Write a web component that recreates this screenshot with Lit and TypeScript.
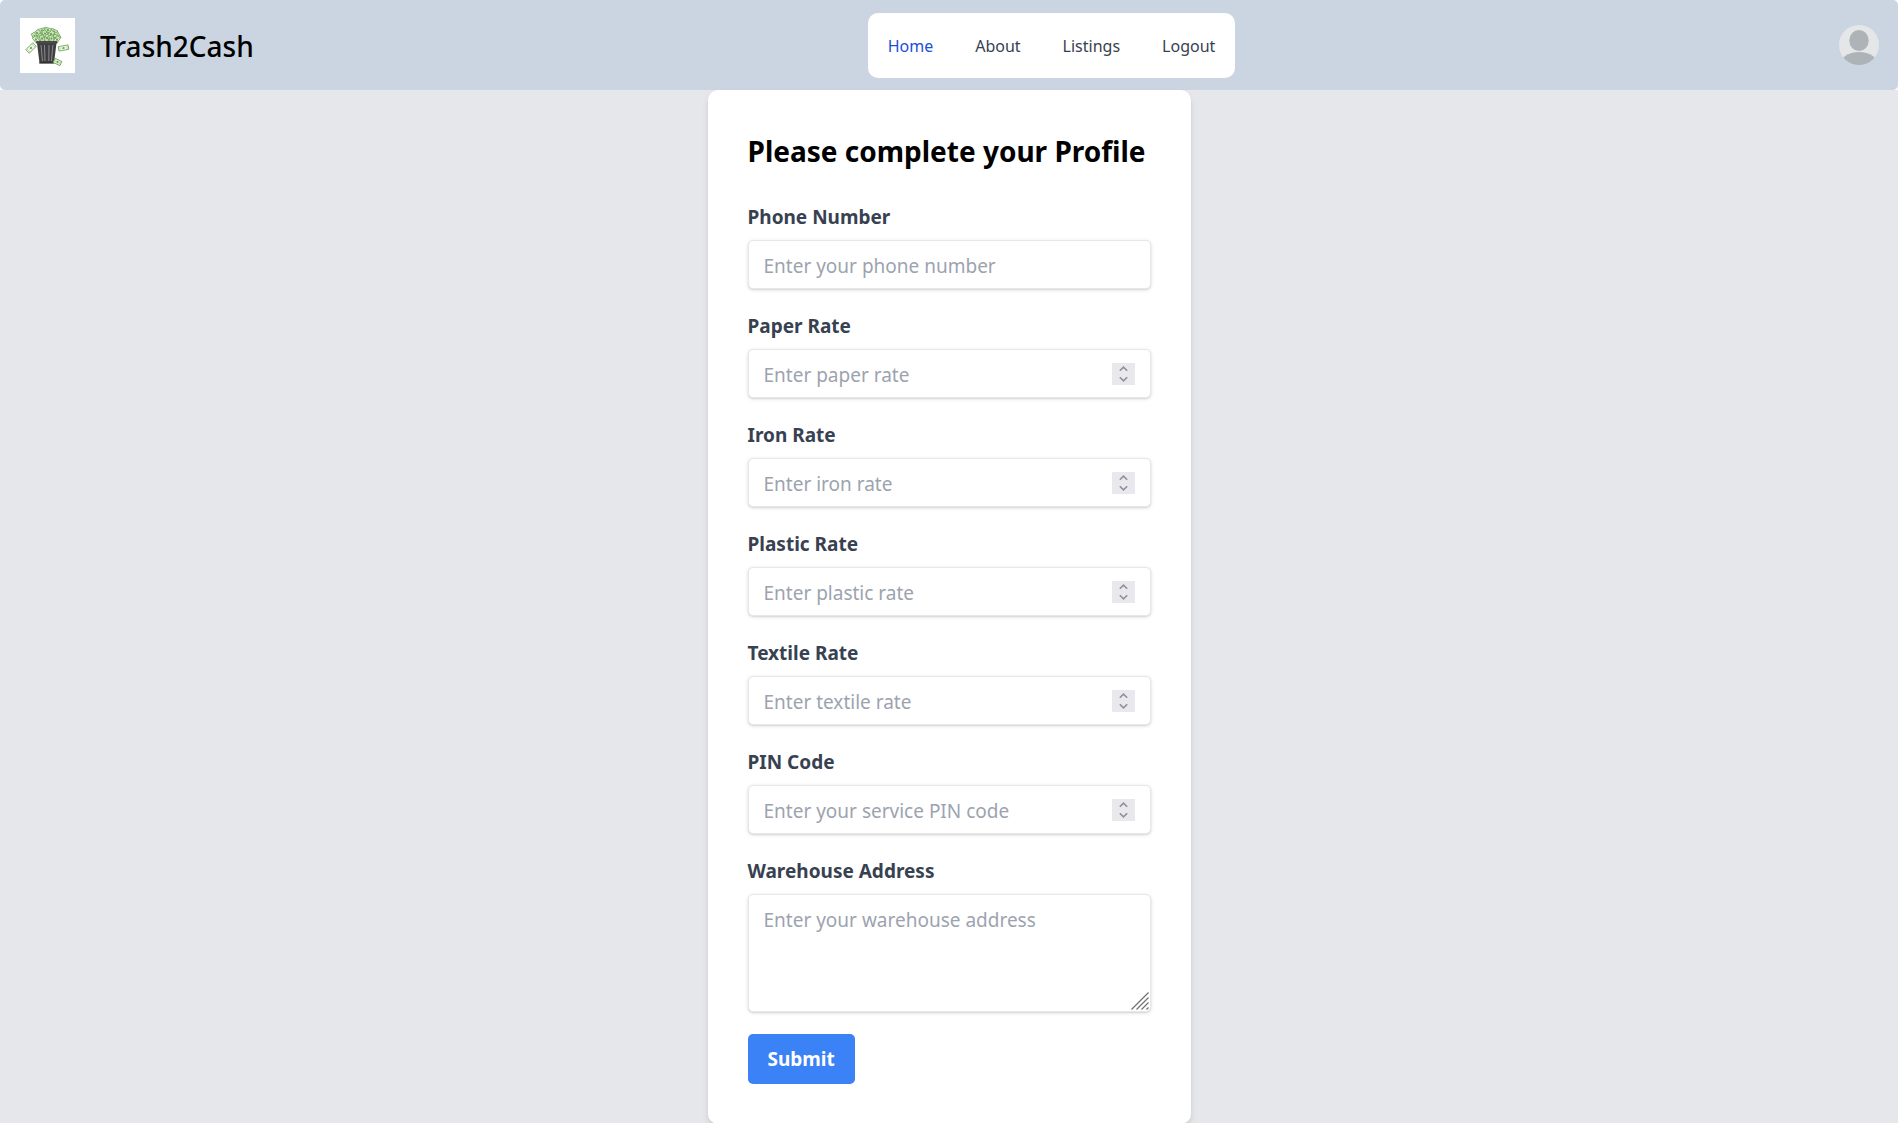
import { LitElement, html, css, svg } from "lit";
import { customElement, property } from "lit/decorators.js";

const note = (x: number, y: number, angle: number, w = 9, h = 5) => svg`
  <g transform="translate(${x} ${y}) rotate(${angle})">
    <rect x=${-w / 2} y=${-h / 2} width=${w} height=${h} fill="#eef5e8" stroke="#6ba351" stroke-width=".8"/>
    <path d="M${-w / 2 + 1.4} ${-h / 2}v${h}M${w / 2 - 1.4} ${-h / 2}v${h}" stroke="#a5cb93" stroke-width=".7"/>
    <ellipse rx="1.2" ry="1.1" fill="#6ba351"/>
  </g>`;

const heap: [number, number, number][] = [
  [22, 12.5, -15], [28, 12, 15], [34, 13.5, 25], [17, 15, -40], [25, 15.5, 60],
  [14.5, 18, 60], [37.5, 17.5, 60], [31, 16, -50], [19.5, 19, -60], [35, 20, -70],
  [16, 21.5, 50], [22, 20.5, 75], [27, 20, -70], [31.5, 20.5, 75], [37, 21.5, -55],
];

const stack = css`"Segoe UI", "Noto Sans", "Open Sans", sans-serif`;

@customElement("app-header")
class AppHeader extends LitElement {
  static styles = css`
    :host { display: block; background: #fff; font-family: ${stack}; }
    .bar {
      display: grid; grid-template-columns: 1fr auto 1fr; align-items: center;
      box-sizing: border-box; min-height: 90px; padding: 13px 19px 12px 20px;
      background: #cbd5e1; border-radius: 5px;
    }
    .brand { display: flex; align-items: center; gap: 25px; color: #000; text-decoration: none; }
    .logo { width: 55px; height: 55px; }
    .name { font-size: 28px; line-height: 40px; font-weight: 500; }
    .menu {
      display: flex; gap: 42px; margin: 0 0 0 204px; padding: 21px 20px 19px; list-style: none;
      background: #fff; border-radius: 10px;
    }
    .link { display: block; font-size: 16px; line-height: 25px; color: #374151; text-decoration: none; }
    .active { color: #1d4ed8; }
    .user { justify-self: end; align-self: start; margin: 12px 0 0; padding: 0; border: 0; background: none; cursor: pointer; }
    .avatar { display: block; width: 40px; height: 40px; }
  `;

  render() {
    return html`
      <header class="bar">
        <a class="brand" href="#home">
          <svg class="logo" viewBox="0 0 55 55" aria-hidden="true">
            <rect width="55" height="55" fill="#fff"/>
            <path d="M14 23L12 17L17 12L26 10.500L35 12L40 17.500L38 23Z" fill="#8bbb74"/>
            ${heap.map(([x, y, a]) => note(x, y, a, 6.5, 4))}
            <path d="M17 25H36.500L34 45H19.500Z" fill="#3f3f41"/>
            <path d="M21 27L22.500 43M24.500 27L25 43M29 27L28.800 43M32.800 27L31.500 43" stroke="#8c8c90" stroke-width="1"/>
            <rect x="16" y="23" width="21.500" height="2.600" rx="1" fill="#4a4a4c"/>
            <path d="M19.300 45H34.200" stroke="#29292b" stroke-width="1.200"/>
            ${note(11, 30, -45, 10, 5)}${note(43.5, 30, -10, 10, 4.5)}${note(37.5, 44, 25, 7.5, 4.5)}
          </svg>
          <span class="name">Trash2Cash</span>
        </a>
        <nav>
          <ul class="menu">
            ${["Home", "About", "Listings", "Logout"].map((t, i) => html`
              <li><a class="link ${i === 0 ? "active" : ""}" href="#${t.toLowerCase()}">${t}</a></li>`)}
          </ul>
        </nav>
        <button class="user" type="button" aria-label="Account">
          <svg class="avatar" viewBox="0 0 40 40" aria-hidden="true">
            <defs><clipPath id="round"><circle cx="20" cy="20" r="20"/></clipPath></defs>
            <g clip-path="url(#round)">
              <rect width="40" height="40" fill="#e4e6e8"/>
              <ellipse cx="20" cy="15.500" rx="9.700" ry="10.500" fill="#adb3b7"/>
              <ellipse cx="20" cy="41" rx="19.500" ry="14" fill="#adb3b7"/>
            </g>
          </svg>
        </button>
      </header>`;
  }
}

@customElement("form-field")
class FormField extends LitElement {
  @property() label = "";
  @property() hint = "";
  @property() kind = "text";

  static styles = css`
    :host { display: block; font-family: ${stack}; }
    .label { display: block; margin-bottom: 8px; font-size: 19px; line-height: 30px; font-weight: 700; color: #374151; }
    .box { display: grid; align-items: center; }
    .control, .spin, .grip { grid-area: 1 / 1; }
    .control {
      box-sizing: border-box; width: 100%; min-width: 0; margin: 0; padding: 10px 15px 8px;
      border: 1px solid #e5e7eb; border-radius: 5px; outline-color: #3b82f6;
      background: #fff; color: #374151; font: 19px/30px ${stack};
      box-shadow: 0 1px 4px rgb(0 0 0 / 10%), 0 1px 2px rgb(0 0 0 / 10%);
      appearance: textfield;
    }
    .control::placeholder { color: #9ca3af; opacity: 1; }
    .control::-webkit-inner-spin-button { appearance: none; margin: 0; }
    .single { height: 49px; }
    .area { display: block; height: 118px; resize: vertical; }
    .area::-webkit-resizer { background: transparent; }
    .spin {
      justify-self: end; display: grid; box-sizing: border-box; width: 23px; height: 22px;
      margin-right: 16px; padding: 1px 0; background: #e9e9ed;
    }
    .step { display: grid; place-items: center; padding: 0; border: 0; background: none; color: #8f8f9d; }
    .arrow { display: block; width: 9px; height: 6px; }
    .grip { justify-self: end; align-self: end; width: 18px; height: 18px; margin: 0 2px 2px 0; pointer-events: none; }
  `;

  private step(direction: 1 | -1) {
    const input = this.renderRoot.querySelector("input");
    if (direction > 0) input?.stepUp();
    else input?.stepDown();
  }

  private arrow(direction: 1 | -1) {
    const d = direction > 0 ? "M.8 4.800L4.500 1.200L8.200 4.800" : "M.8 1.200L4.500 4.800L8.200 1.200";
    return html`
      <button class="step" type="button" tabindex="-1" aria-label=${direction > 0 ? "Increase" : "Decrease"}
        @click=${() => this.step(direction)}>
        <svg class="arrow" viewBox="0 0 9 6" fill="none" stroke="currentColor" stroke-width="1.600"><path d=${d}/></svg>
      </button>`;
  }

  render() {
    const area = this.kind === "area";
    return html`
      <label class="label" for="control">${this.label}</label>
      <div class="box">
        ${area
          ? html`<textarea class="control area" id="control" placeholder=${this.hint}></textarea>
              <svg class="grip" viewBox="0 0 18 18" stroke="#70706c" stroke-width="1.200" aria-hidden="true">
                <path d="M.5 17.500L17.500 .5M5.500 17.500L17.500 5.500M10.500 17.500L17.500 10.500M15.500 17.500L17.500 15.500"/>
              </svg>`
          : html`<input class="control single" id="control" type=${this.kind} placeholder=${this.hint}>`}
        ${this.kind === "number" ? html`<div class="spin">${this.arrow(1)}${this.arrow(-1)}</div>` : ""}
      </div>`;
  }
}

@customElement("app-root")
class AppRoot extends LitElement {
  static styles = css`
    :host { display: block; min-height: 100vh; background: #e5e7eb; font-family: ${stack}; }
    .card {
      box-sizing: border-box; width: 100%; max-width: 483px; margin: 0 auto; padding: 40px;
      background: #fff; border-radius: 10px;
      box-shadow: 0 5px 8px -1px rgb(0 0 0 / 10%), 0 2px 5px -2px rgb(0 0 0 / 10%);
    }
    .title { margin: 0 0 30px; font-size: 28px; line-height: 42px; font-weight: 700; color: #000; white-space: nowrap; }
    .form { display: grid; gap: 22px; }
    .submit {
      justify-self: start; padding: 10px 20px; border: 0; border-radius: 5px;
      background: #3b82f6; color: #fff; font: 700 19px/30px ${stack}; cursor: pointer;
    }
  `;

  render() {
    return html`
      <app-header></app-header>
      <main class="card">
        <h1 class="title">Please complete your Profile</h1>
        <form class="form" @submit=${(e: Event) => e.preventDefault()}>
          <form-field label="Phone Number" hint="Enter your phone number" kind="tel"></form-field>
          <form-field label="Paper Rate" hint="Enter paper rate" kind="number"></form-field>
          <form-field label="Iron Rate" hint="Enter iron rate" kind="number"></form-field>
          <form-field label="Plastic Rate" hint="Enter plastic rate" kind="number"></form-field>
          <form-field label="Textile Rate" hint="Enter textile rate" kind="number"></form-field>
          <form-field label="PIN Code" hint="Enter your service PIN code" kind="number"></form-field>
          <form-field label="Warehouse Address" hint="Enter your warehouse address" kind="area"></form-field>
          <button class="submit" type="submit">Submit</button>
        </form>
      </main>`;
  }
}
